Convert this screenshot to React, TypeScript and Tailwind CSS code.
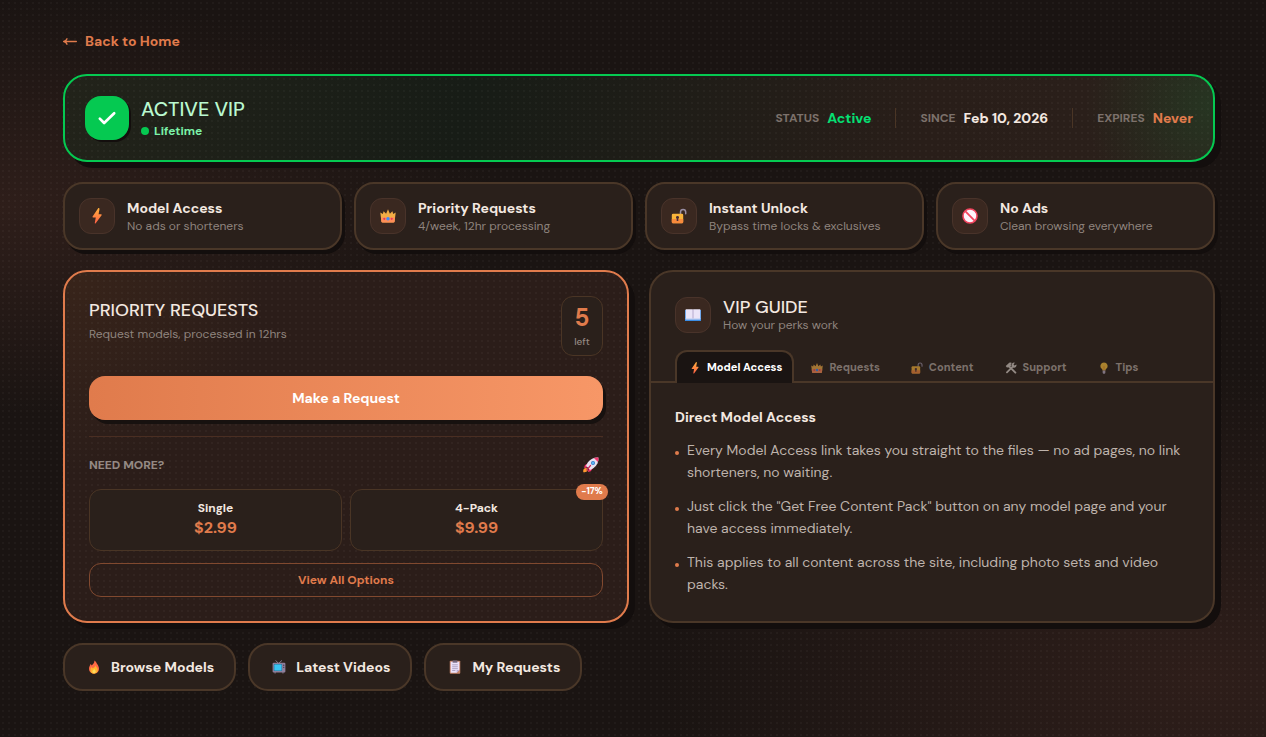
import { useState, type ReactNode } from 'react';
import clsx from 'clsx';

type IconProps = { className?: string };

function Bolt({ className = 'size-4' }: IconProps) {
  return (
    <svg viewBox="0 0 16 16" className={className} aria-hidden="true">
      <defs>
        <linearGradient id="bolt" x1="0" y1="0" x2="0" y2="1">
          <stop offset="0" stopColor="#ffb13d" />
          <stop offset="1" stopColor="#ff5f45" />
        </linearGradient>
      </defs>
      <path d="M9 .5 3.600 8.500c-.3.500 0 .9.500.9h2.700l-1 5.400c-.1.600.5.900.9.400l5.900-8c.3-.5 0-1-.5-1H9.600l.9-5.200C10.600.1 9.500-.2 9 .5z" fill="url(#bolt)" />
    </svg>
  );
}

function Crown({ className = 'size-4' }: IconProps) {
  return (
    <svg viewBox="0 0 16 16" className={className} aria-hidden="true">
      <path d="M.3 4.600 2.800 6 3.600 3.200l2.500 2.500L8 1.300l1.900 4.400 2.500-2.500.8 2.800 2.500-1.400-1.100 8.900c-.1.700-.5 1.100-1.200 1.100H2.600c-.7 0-1.100-.4-1.200-1.100z" fill="#f3ad45" />
      <path d="M1 9.600h14l-.4 3.900c-.1.700-.5 1.100-1.200 1.100H2.600c-.7 0-1.100-.4-1.200-1.100z" fill="#ff8d58" />
      <circle cx="8" cy="10.700" r="1.700" fill="#3f8cf5" />
      <circle cx="4.300" cy="10.800" r="1.100" fill="#e8375c" />
      <circle cx="11.700" cy="10.800" r="1.100" fill="#e8375c" />
    </svg>
  );
}

function Unlock({ className = 'size-4' }: IconProps) {
  return (
    <svg viewBox="0 0 16 16" className={className} aria-hidden="true">
      <path d="M9.500 7V4a2.600 2.600 0 0 1 5.200 0v1.700" fill="none" stroke="#998ea4" strokeWidth="1.500" strokeLinecap="round" />
      <rect x=".8" y="5.700" width="11.400" height="9.600" rx="1.400" fill="#f9b43a" />
      <path d="M.8 11h11.400v2.900c0 .8-.6 1.400-1.400 1.400H2.200c-.8 0-1.400-.6-1.400-1.400z" fill="#f78a3c" />
      <path d="M6.500 7.900a1.500 1.500 0 0 1 .8 2.800v2.200H5.700v-2.200a1.500 1.500 0 0 1 .8-2.800z" fill="#4a2c36" />
    </svg>
  );
}

function Prohibited({ className = 'size-4' }: IconProps) {
  return (
    <svg viewBox="0 0 16 16" className={className} aria-hidden="true">
      <circle cx="8" cy="8" r="7" fill="#fdf3fb" stroke="#f2455f" strokeWidth="1.600" />
      <path d="m3.200 3.200 9.600 9.600" stroke="#f2455f" strokeWidth="1.800" />
    </svg>
  );
}

function Book({ className = 'size-4' }: IconProps) {
  return (
    <svg viewBox="0 0 16 16" className={className} aria-hidden="true">
      <path d="M0 3h16v11H0z" fill="#3c8ee6" />
      <path d="M.7 2.300H7.600l.4.500.4-.5h6.900v10H.7z" fill="#eae4f8" />
      <path d="M8 2.800v9.500" stroke="#a79bc2" strokeWidth=".8" />
      <path d="M.7 11.300h6.600l.7.700.7-.7h6.600v1.200H.7z" fill="#c6d4f4" />
    </svg>
  );
}

function Rocket({ className = 'size-4' }: IconProps) {
  return (
    <svg viewBox="0 0 16 16" className={className} aria-hidden="true">
      <path d="M1 11.800c1-1 2.500-1.300 3.300-.3.900 1 .4 2.300-.5 3-.9.700-3 1-3.400.7-.4-.4-.2-2.600.6-3.400z" fill="#ff9b2f" />
      <path d="m5.500 5.700-3.700 2.500-.6 3 3.500-1.200zM10.300 10.500l-2.500 3.700-3 .8 1.300-3.700z" fill="#f4356e" />
      <path d="M15.400.6c.5 3.800-1.200 7.800-4.700 10.500L7.200 13l-4.200-4.200 1.900-3.500C7.600 1.900 11.600.1 15.400.6z" fill="#e6e0ef" />
      <path d="M15.400.6c.2 1.700 0 3.100-.5 4.500L10.900 1.100c1.400-.5 2.800-.7 4.500-.5z" fill="#f4356e" />
      <circle cx="10" cy="6" r="2" fill="#3679c9" />
      <circle cx="10" cy="6" r="1.200" fill="#5ab8f6" />
      <path d="m7.500 8.500-3.700 4.500" stroke="#d12a5e" strokeWidth="1.200" strokeLinecap="round" />
    </svg>
  );
}

function Tools({ className = 'size-4' }: IconProps) {
  return (
    <svg viewBox="0 0 16 16" className={className} aria-hidden="true">
      <path d="m5.800 6.200 8 8" stroke="#d8cfc9" strokeWidth="2.600" strokeLinecap="round" />
      <path d="M1 5.200 5.300 1.200c1.400-.7 2.800-.6 4 .2L7.500 3.100l1 1.300-3.200 3.200-1.200-1-1.300 1z" fill="#d8cfc9" />
      <path d="m2.600 13.800 8.300-8.400" stroke="#d8cfc9" strokeWidth="2.400" strokeLinecap="round" />
      <path d="M12.900.9 11.400 3.500l1.200 1.300 2.700-1.400c.5 2.700-1.600 4.800-4.200 4.100L8.700 5.100C8.300 2.600 10.400.4 12.900.9z" fill="#d8cfc9" />
    </svg>
  );
}

function Bulb({ className = 'size-4' }: IconProps) {
  return (
    <svg viewBox="0 0 16 16" className={className} aria-hidden="true">
      <path d="M8 .5a4.800 4.800 0 0 1 3 8.500c-.8.700-1 1.300-1 2.200H6c0-.9-.2-1.500-1-2.200A4.800 4.800 0 0 1 8 .5z" fill="#ffc43b" />
      <path d="M6.700 6 8 7.200 9.300 6M8 7.200v4" fill="none" stroke="#f08a24" strokeWidth=".9" />
      <path d="M6.200 11.200h3.600v3.100c0 .7-.6 1.300-1.800 1.300s-1.800-.6-1.800-1.300z" fill="#b9adc4" />
    </svg>
  );
}

function Fire({ className = 'size-4' }: IconProps) {
  return (
    <svg viewBox="0 0 16 16" className={className} aria-hidden="true">
      <path d="M8.500.5c2.200 1.400 2.400 3 3.300 4.400 1.100 1.700 1.900 3.200 1.900 5.100 0 3.400-2.400 5.600-5.700 5.600S2.300 13.300 2.300 10c0-2.300 1.200-3.500 1.800-5.300.8.500 1 1 1.200 1.700C6.900 4.800 8.500 3.300 8.500.5z" fill="#ff6945" />
      <path d="M9.600 6c.5 1.900 2.700 3 2.700 5.500 0 2.500-1.800 4.100-4.200 4.100-2.500 0-4.200-1.600-4.200-4 0-1.500.6-2.500 1.500-3.500.2.700.5 1.100 1 1.300C7.800 8.700 9.500 8 9.600 6z" fill="#ffb52e" />
      <path d="M8.300 10c.3 1.400 1.700 1.700 1.700 3.200 0 1.200-.8 1.900-1.900 1.900s-1.900-.7-1.900-1.900c0-1.300 1.600-1.700 2.100-3.200z" fill="#ffd95c" />
    </svg>
  );
}

function Tv({ className = 'size-4' }: IconProps) {
  return (
    <svg viewBox="0 0 16 16" className={className} aria-hidden="true">
      <path d="M4.500.8 7.500 4 11 .8M3.500 13v2M12.500 13v2" fill="none" stroke="#8b8296" strokeWidth="1.100" strokeLinecap="round" />
      <rect x=".7" y="3.200" width="14.600" height="11" rx="1.200" fill="#8e7f9c" />
      <rect x="2" y="4.600" width="9.500" height="8" rx="1" fill="#2d7396" />
      <rect x="2.700" y="5.200" width="8.200" height="6.800" rx=".7" fill="#39c4f2" />
      <circle cx="13.400" cy="6" r=".8" fill="#463c50" />
      <circle cx="13.400" cy="8.400" r=".8" fill="#463c50" />
    </svg>
  );
}

function Clipboard({ className = 'size-4' }: IconProps) {
  return (
    <svg viewBox="0 0 16 16" className={className} aria-hidden="true">
      <rect x="2" y=".8" width="12" height="14.800" rx="1" fill="#c6846a" />
      <path d="M3.100 2h9.800v9.500l-3 3H3.100z" fill="#ebe2fb" />
      <path d="M12.900 11.500h-3v3z" fill="#b9a9d3" />
      <path d="M5.300.5h5.400v2.600H5.300z" fill="#75687f" />
      <path d="M4.800 5.500h6.400M4.800 7.700h6.400M4.800 9.900h6.400M4.800 12h3.600" stroke="#9588aa" strokeWidth=".8" />
    </svg>
  );
}

const perks = [
  { title: 'Model Access', text: 'No ads or shorteners', Icon: Bolt },
  { title: 'Priority Requests', text: '4/week, 12hr processing', Icon: Crown },
  { title: 'Instant Unlock', text: 'Bypass time locks & exclusives', Icon: Unlock },
  { title: 'No Ads', text: 'Clean browsing everywhere', Icon: Prohibited },
];

const tabs = [
  { label: 'Model Access', Icon: Bolt },
  { label: 'Requests', Icon: Crown },
  { label: 'Content', Icon: Unlock },
  { label: 'Support', Icon: Tools },
  { label: 'Tips', Icon: Bulb },
];

const guide = [
  'Every Model Access link takes you straight to the files — no ad pages, no link shorteners, no waiting.',
  'Just click the "Get Free Content Pack" button on any model page and your have access immediately.',
  'This applies to all content across the site, including photo sets and video packs.',
];

const links = [
  { label: 'Browse Models', Icon: Fire },
  { label: 'Latest Videos', Icon: Tv },
  { label: 'My Requests', Icon: Clipboard },
];

function IconBox({ children }: { children: ReactNode }) {
  return (
    <span className="flex size-9 shrink-0 items-center justify-center rounded-xl border border-[#49332a] bg-[#3a2820]">
      {children}
    </span>
  );
}

function Stat({ label, value, tone }: { label: string; value: string; tone: string }) {
  return (
    <div className="flex items-center gap-2">
      <dt className="text-xs font-bold text-[#7c716b]">{label}</dt>
      <dd className={clsx('text-sm font-extrabold', tone)}>{value}</dd>
    </div>
  );
}

function StatusCard() {
  return (
    <section className="flex flex-wrap items-center justify-between gap-4 rounded-3xl border-2 border-[#05c951] bg-[radial-gradient(circle_at_100%_35%,#05c95120,transparent_128px),radial-gradient(#ffffff08_1px,transparent_1px),linear-gradient(100deg,#22231a_0%,#171c16_35%,#291e19_75%,#2b201b_100%)] bg-[size:100%_100%,6px_6px,100%_100%] p-5 shadow-[6px_6px_0_#130e0d]">
      <div className="flex items-center gap-3">
        <span className="flex size-11 items-center justify-center rounded-2xl bg-[#05c951] shadow-[2px_2px_0_#130e0d]">
          <svg viewBox="0 0 20 20" className="size-6" fill="none" stroke="#fff" strokeWidth="2.200" strokeLinecap="round" strokeLinejoin="round" aria-hidden="true">
            <path d="m4 10.500 3.600 3.700L16 6" />
          </svg>
        </span>
        <div>
          <h1 className="text-xl leading-6 font-medium text-[#b9f8cf]">ACTIVE VIP</h1>
          <p className="flex items-center gap-[5px] pt-0.5 text-xs leading-4 font-bold text-[#7bf1a8]">
            <span className="size-2 rounded-full bg-[#05c951]" />
            Lifetime
          </p>
        </div>
      </div>
      <dl className="flex items-center gap-6">
        <Stat label="STATUS" value="Active" tone="text-[#05df72]" />
        <span className="h-5 w-px bg-[#4a3525]" />
        <Stat label="SINCE" value="Feb 10, 2026" tone="text-[#f3e8e0]" />
        <span className="h-5 w-px bg-[#4a3525]" />
        <Stat label="EXPIRES" value="Never" tone="text-[#e07b4c]" />
      </dl>
    </section>
  );
}

function RequestsPanel() {
  return (
    <section className="rounded-3xl border-2 border-[#e07b4c] bg-[#2b1d19] bg-[radial-gradient(#ffffff08_1px,transparent_1px),radial-gradient(circle_at_0_0,#38241a,transparent_200px)] bg-[size:6px_6px,100%_100%] p-6 shadow-[6px_6px_0_#130e0d]">
      <div className="flex items-start justify-between">
        <div>
          <h2 className="text-lg leading-7 font-medium text-[#f3e8e0]">PRIORITY REQUESTS</h2>
          <p className="pt-0.5 text-xs leading-4 text-[#8f847e]">Request models, processed in 12hrs</p>
        </div>
        <div className="flex h-15 w-[42px] flex-col items-center justify-center gap-1 rounded-xl border border-[#4a3525] bg-[#2a201b]">
          <span className="text-2xl leading-7 font-bold text-[#e07b4c]">5</span>
          <span className="text-[10px] leading-3 font-medium text-[#948983]">left</span>
        </div>
      </div>
      <button type="button" className="mt-5 block h-11 w-full rounded-2xl bg-linear-to-r from-[#e07b4c] to-[#f79767] text-sm font-bold text-white shadow-[3px_4px_0_#17110f]">
        Make a Request
      </button>
      <div className="mt-4 border-t border-[#4a2e22] pt-4">
        <div className="flex h-6 items-center justify-between">
          <h3 className="text-xs font-extrabold text-[#948983]">NEED MORE?</h3>
          <Rocket className="mr-1 size-4" />
        </div>
        <div className="mt-3 grid grid-cols-2 gap-2">
          <button type="button" className="flex h-[62px] flex-col items-center justify-center rounded-xl border border-[#4a3525] bg-[#2a201b]">
            <span className="text-xs leading-4 font-bold text-[#f3e8e0]">Single</span>
            <span className="text-base leading-6 font-bold text-[#e07b4c]">$2.99</span>
          </button>
          <button type="button" className="relative flex h-[62px] flex-col items-center justify-center rounded-xl border border-[#4a3525] bg-[#2a201b]">
            <span className="absolute -top-1.5 -right-1.5 flex h-4 w-8 items-center justify-center rounded-full bg-[#e07b4c] text-[9px] font-extrabold text-white">-17%</span>
            <span className="text-xs leading-4 font-bold text-[#f3e8e0]">4-Pack</span>
            <span className="text-base leading-6 font-bold text-[#e07b4c]">$9.99</span>
          </button>
        </div>
        <button type="button" className="mt-3 block h-[34px] w-full rounded-xl border border-[#81492f] text-xs font-bold text-[#e07b4c]">
          View All Options
        </button>
      </div>
    </section>
  );
}

function GuidePanel() {
  const [active, setActive] = useState('Model Access');

  return (
    <section className="rounded-3xl border-2 border-[#4a3728] bg-[#2a201b] shadow-[6px_6px_0_#130e0d]">
      <header className="flex items-center gap-3 px-6 pt-[25px]">
        <IconBox><Book /></IconBox>
        <div>
          <h2 className="text-lg leading-5 font-medium text-[#f3e8e0]">VIP GUIDE</h2>
          <p className="text-xs leading-4 text-[#8f847e]">How your perks work</p>
        </div>
      </header>
      <div role="tablist" className="mt-[17px] flex gap-[3px] border-b-2 border-[#4a3728] px-6">
        {tabs.map(({ label, Icon }) => (
          <button
            key={label}
            type="button"
            role="tab"
            aria-selected={active === label}
            onClick={() => setActive(label)}
            className={clsx(
              '-mb-0.5 flex h-[33px] items-center gap-1.5 rounded-t-xl border-2 border-b-0 text-[11px] font-extrabold',
              active === label ? 'border-[#4a3728] bg-[#1a1412] pr-2.5 pl-3 text-white' : 'border-transparent px-3 text-[#7c716b]',
            )}
          >
            <Icon className={clsx('size-3', active !== label && 'opacity-60')} />
            {label}
          </button>
        ))}
      </div>
      <div role="tabpanel" className="px-6 pt-6">
        <h3 className="text-sm leading-5 font-bold text-[#f3e8e0]">Direct Model Access</h3>
        <ul className="mt-3 space-y-3 pb-5 text-sm leading-[22px] text-[#beb3ac]">
          {guide.map((line) => (
            <li key={line} className="flex gap-2">
              <span className="mt-3 size-1 shrink-0 rounded-full bg-[#e07b4c]" />
              {line}
            </li>
          ))}
        </ul>
      </div>
    </section>
  );
}

export default function App() {
  return (
    <div className="min-h-screen bg-[#1a1412] bg-[radial-gradient(#ffffff08_1px,transparent_1px),radial-gradient(ellipse_at_0_28%,#2e1e1a,transparent_28%),radial-gradient(ellipse_at_95%_92%,#2e1e1a,transparent_32%)] bg-[size:6px_6px,100%_100%,100%_100%] pl-3 font-['DM_Sans',Inter,sans-serif]">
      <main className="mx-auto max-w-6xl pt-[31px] pb-8">
        <a href="#" className="flex h-5 w-fit items-center gap-2 text-sm font-bold text-[#e07b4c]">
          <svg viewBox="0 0 14 10" className="h-2.5 w-3.5" fill="none" stroke="currentColor" strokeWidth="1.400" strokeLinecap="round" strokeLinejoin="round" aria-hidden="true">
            <path d="M13.300 5.500H1M4 2.800C3.500 4.200 2.300 5.200.7 5.500 2.300 5.800 3.500 6.800 4 8.200" />
          </svg>
          Back to Home
        </a>

        <div className="mt-[23px] flex flex-col gap-5">
          <StatusCard />

          <section className="grid grid-cols-2 gap-3 lg:grid-cols-4">
            {perks.map(({ title, text, Icon }) => (
              <div key={title} className="flex items-center gap-3 rounded-[20px] border-2 border-[#4a3728] bg-[#2a201b] p-3.5 shadow-[3px_4px_0_#130e0d]">
                <IconBox><Icon /></IconBox>
                <div>
                  <h2 className="text-sm leading-5 font-bold text-[#f3e8e0]">{title}</h2>
                  <p className="text-xs leading-4 text-[#8f847e]">{text}</p>
                </div>
              </div>
            ))}
          </section>

          <div className="grid gap-5 lg:grid-cols-2">
            <RequestsPanel />
            <GuidePanel />
          </div>

          <nav className="flex flex-wrap gap-3">
            {links.map(({ label, Icon }) => (
              <a key={label} href="#" className="flex h-12 items-center gap-2 rounded-[20px] border-2 border-[#4a3728] bg-[#2a201b] px-5 text-sm font-bold text-[#f3e8e0]">
                <Icon className="mx-0.5 size-3.5" />
                {label}
              </a>
            ))}
          </nav>
        </div>
      </main>
    </div>
  );
}
